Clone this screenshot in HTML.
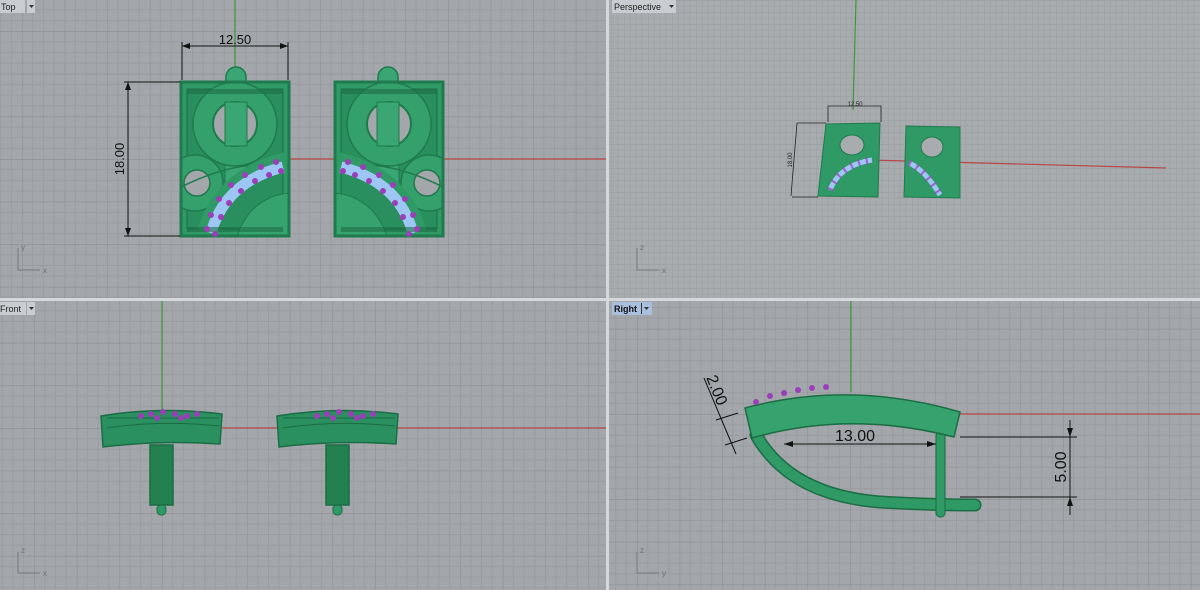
<!DOCTYPE html>
<html><head><meta charset="utf-8"><style>
html,body{margin:0;padding:0;background:#d6d9dc;}
svg{display:block}
text{font-family:"Liberation Sans",sans-serif}
</style></head><body>
<svg width="1200" height="590" viewBox="0 0 1200 590" xmlns="http://www.w3.org/2000/svg">
<defs>
<pattern id="gT" x="235" y="159" width="42.6" height="42.6" patternUnits="userSpaceOnUse">
<rect width="42.6" height="42.6" fill="#a3a6aa"/>
<path d="M10.65 0V42.6M21.3 0V42.6M31.95 0V42.6M0 10.65H42.6M0 21.3H42.6M0 31.95H42.6" stroke="#999ca0" stroke-width="1"/>
<path d="M0 0V42.6M0 0H42.6" stroke="#8c8f93" stroke-width="1.2"/>
</pattern>
<pattern id="gF" x="162" y="428" width="42.6" height="42.6" patternUnits="userSpaceOnUse">
<rect width="42.6" height="42.6" fill="#a3a6aa"/>
<path d="M10.65 0V42.6M21.3 0V42.6M31.95 0V42.6M0 10.65H42.6M0 21.3H42.6M0 31.95H42.6" stroke="#999ca0" stroke-width="1"/>
<path d="M0 0V42.6M0 0H42.6" stroke="#8c8f93" stroke-width="1.2"/>
</pattern>
<pattern id="gR" x="850" y="414" width="42.6" height="42.6" patternUnits="userSpaceOnUse">
<rect width="42.6" height="42.6" fill="#a3a6aa"/>
<path d="M10.65 0V42.6M21.3 0V42.6M31.95 0V42.6M0 10.65H42.6M0 21.3H42.6M0 31.95H42.6" stroke="#999ca0" stroke-width="1"/>
<path d="M0 0V42.6M0 0H42.6" stroke="#8c8f93" stroke-width="1.2"/>
</pattern>
<pattern id="gP" x="0" y="0" width="24" height="12" patternUnits="userSpaceOnUse">
<rect width="24" height="12" fill="#a9acaf"/>
<path d="M6 0V12M12 0V12M18 0V12M0 6H24" stroke="#a0a3a6" stroke-width="1"/>
<path d="M0 0V12M0 0H24" stroke="#989b9f" stroke-width="1"/>
</pattern>
<clipPath id="ec"><rect x="0" y="15" width="108" height="154"/></clipPath>
<g id="ear">
<rect x="45" y="0" width="20" height="30" rx="10" fill="#3aa673" stroke="#1f7a4d" stroke-width="1.5"/>
<g clip-path="url(#ec)">
<rect x="0" y="15" width="108" height="154" fill="#2f9a66"/>
<rect x="6" y="22" width="96" height="140" fill="#2a8f5e" stroke="#1c6e45"/>
<rect x="44" y="22" width="22" height="100" fill="#3aa673" stroke="#1f7a4d"/>
<circle cx="54" cy="57" r="42" fill="#34a06c" stroke="#1f7a4d" stroke-width="1.5"/>
<circle cx="54" cy="57" r="22" fill="#a3a6aa" stroke="#1f7a4d" stroke-width="2"/>
<rect x="44" y="35" width="22" height="44" fill="#3aa673" stroke="#1f7a4d"/>
<circle cx="14" cy="116" r="28" fill="#34a06c" stroke="#1f7a4d" stroke-width="1.5"/>
<circle cx="16" cy="116" r="13" fill="#a3a6aa" stroke="#1f7a4d" stroke-width="1.5"/>
<path d="M0 120 Q60 90 108 100" fill="none" stroke="#1f7a4d" stroke-width="1.5"/>
<path d="M56 169 Q70 130 108 126 L108 169Z" fill="#36a26e" stroke="#1f7a4d"/>
<path d="M24 169 Q40 110 105 94" fill="none" stroke="#2f9a66" stroke-width="18"/>
<path d="M30 166 Q44 115 102 100" fill="none" stroke="#9dc6f5" stroke-width="11"/>
<rect x="6" y="160" width="96" height="5" fill="#1e6e45" opacity=".6"/>
<rect x="6" y="22" width="96" height="5" fill="#1e6e45" opacity=".6"/>
</g>
<rect x="0" y="15" width="108" height="154" fill="none" stroke="#1f7a4d" stroke-width="3"/>
<g fill="#9b3fb8">
<circle cx="26" cy="162" r="3"/><circle cx="34" cy="167" r="3"/><circle cx="30" cy="148" r="3"/><circle cx="40" cy="150" r="3"/>
<circle cx="38" cy="132" r="3"/><circle cx="48" cy="136" r="3"/><circle cx="50" cy="118" r="3"/><circle cx="60" cy="124" r="3"/>
<circle cx="64" cy="108" r="3"/><circle cx="74" cy="114" r="3"/><circle cx="80" cy="100" r="3"/><circle cx="88" cy="108" r="3"/>
<circle cx="95" cy="95" r="3"/><circle cx="100" cy="104" r="3"/>
</g>
</g>
<g id="fr">
<path d="M0 6 Q60 -4 121 4 L119 34 Q60 30 2 37Z" fill="#2a9060" stroke="#1b6d44" stroke-width="1.5"/>
<path d="M6 8 L118 8 M6 18 Q60 10 118 16" stroke="#1b6d44" fill="none"/>
<rect x="49" y="35" width="23" height="60" fill="#23804f" stroke="#1b6d44" stroke-width="1.5"/>
<rect x="56" y="95" width="9" height="10" rx="4" fill="#2f9a66" stroke="#1b6d44"/>
<g fill="#9b3fb8"><circle cx="40" cy="6" r="3"/><circle cx="50" cy="4" r="3"/><circle cx="62" cy="2" r="3"/><circle cx="74" cy="4" r="3"/><circle cx="86" cy="6" r="3"/><circle cx="96" cy="4" r="3"/><circle cx="56" cy="8" r="3"/><circle cx="80" cy="8" r="3"/></g>
</g>
</defs>

<rect x="0" y="0" width="606" height="298" fill="url(#gT)"/>
<rect x="609" y="0" width="591" height="298" fill="url(#gP)"/>
<rect x="0" y="301" width="606" height="289" fill="url(#gF)"/>
<rect x="609" y="301" width="591" height="289" fill="url(#gR)"/>
<rect x="606" y="0" width="3" height="590" fill="#d6d9dc"/>
<rect x="0" y="298" width="1200" height="3" fill="#d6d9dc"/>

<line x1="235" y1="0" x2="235" y2="70" stroke="#3a9a3a" stroke-width="1.2"/>
<line x1="289" y1="159" x2="606" y2="159" stroke="#b84646" stroke-width="1.2"/>
<use href="#ear" x="181" y="67"/>
<use href="#ear" transform="translate(443,67) scale(-1,1)"/>
<g stroke="#111" stroke-width="1" fill="none">
<path d="M182 42V80M288 42V80M182 46H288"/>
<path d="M124 82H180M124 236H180M128 82V236"/>
</g>
<path d="M182 46l8-3v6zM288 46l-8-3v6zM128 82l-3 8h6zM128 236l-3-8h6z" fill="#111"/>
<text x="235" y="44" font-size="13" text-anchor="middle" fill="#111">12.50</text>
<text transform="translate(124,159) rotate(-90)" font-size="13" text-anchor="middle" fill="#111">18.00</text>

<line x1="856" y1="0" x2="853" y2="110" stroke="#3a9a3a" stroke-width="1.2"/>
<line x1="870" y1="160" x2="1166" y2="168" stroke="#b84646" stroke-width="1.2"/>
<path d="M826 124 L880 123 L878 197 L818 196Z" fill="#2f9a66" stroke="#1f7a4d"/>
<ellipse cx="852" cy="145" rx="12" ry="10" fill="#a9acaf" stroke="#1f7a4d"/>
<path d="M830 190 Q840 165 872 160" stroke="#9dc6f5" stroke-width="5" fill="none"/>
<path d="M830 190 Q840 165 872 160" stroke="#9b3fb8" stroke-width="7" stroke-dasharray="2 6" fill="none" opacity=".7"/>
<path d="M906 126 L960 127 L960 198 L904 197Z" fill="#2f9a66" stroke="#1f7a4d"/>
<ellipse cx="932" cy="147" rx="11" ry="10" fill="#a9acaf" stroke="#1f7a4d"/>
<path d="M909 163 Q925 170 940 195" stroke="#9dc6f5" stroke-width="5" fill="none"/>
<path d="M909 163 Q925 170 940 195" stroke="#9b3fb8" stroke-width="7" stroke-dasharray="2 6" fill="none" opacity=".7"/>
<path d="M828 122V106H881V122M797 123H826M792 197H818M797 123L791 196" stroke="#222" fill="none" stroke-width=".8"/>
<text x="855" y="106" font-size="6" text-anchor="middle" fill="#222">12.50</text>
<text transform="translate(792,160) rotate(-90)" font-size="6" text-anchor="middle" fill="#222">18.00</text>

<line x1="162" y1="301" x2="162" y2="410" stroke="#3a9a3a" stroke-width="1.2"/>
<line x1="222" y1="428" x2="606" y2="428" stroke="#b84646" stroke-width="1.2"/>
<use href="#fr" x="101" y="410"/>
<use href="#fr" x="277" y="410"/>

<line x1="851" y1="301" x2="851" y2="392" stroke="#3a9a3a" stroke-width="1.2"/>
<line x1="958" y1="414" x2="1200" y2="414" stroke="#b84646" stroke-width="1.2"/>
<path d="M756 435 Q790 495 880 502 Q930 505 975 505" fill="none" stroke="#1b6d44" stroke-width="13" stroke-linecap="round"/>
<path d="M756 435 Q790 495 880 502 Q930 505 975 505" fill="none" stroke="#2f9a66" stroke-width="10" stroke-linecap="round"/>
<rect x="936" y="432" width="9" height="85" rx="4" fill="#2f9a66" stroke="#1b6d44"/>
<path d="M745 408 Q850 380 960 412 L954 437 Q850 410 752 438Z" fill="#36a26e" stroke="#1b6d44" stroke-width="1.5"/>
<g fill="#9b3fb8"><circle cx="756" cy="402" r="3"/><circle cx="770" cy="396" r="3"/><circle cx="784" cy="393" r="3"/><circle cx="798" cy="390" r="3"/><circle cx="812" cy="388" r="3"/><circle cx="826" cy="387" r="3"/></g>
<g stroke="#111" fill="none" stroke-width="1">
<path d="M784 444H936M960 437H1077M960 497H1077M1070 420V515"/>
<path d="M704 378L736 454M716 420L738 413M725 445L747 438"/>
</g>
<path d="M784 444l9-3v6zM936 444l-9-3v6zM1070 437l-3-9h6zM1070 497l-3 9h6z" fill="#111"/>
<text x="855" y="441" font-size="16" text-anchor="middle" fill="#111">13.00</text>
<text transform="translate(1066,467) rotate(-90)" font-size="16" text-anchor="middle" fill="#111">5.00</text>
<text transform="translate(712,392) rotate(68)" font-size="16" text-anchor="middle" fill="#111">2.00</text>

<g stroke="#7e8185" fill="none" stroke-width="1.2">
<path d="M18 248V270H40"/><path d="M18 552V573H40"/><path d="M637 552V573H659"/><path d="M637 248V270H659"/>
</g>
<g font-size="8" fill="#6e7175">
<text x="21" y="250">y</text><text x="43" y="273">x</text>
<text x="21" y="553">z</text><text x="43" y="576">x</text>
<text x="640" y="553">z</text><text x="662" y="576">y</text>
<text x="640" y="250">z</text><text x="662" y="273">x</text>
</g>

<g font-size="9">
<rect x="0" y="0" width="25" height="13" fill="#c9ccd0"/><rect x="27" y="0" width="8" height="13" fill="#c9ccd0"/>
<text x="1" y="10" fill="#222">Top</text><path d="M29 5h5l-2.5 3z" fill="#333"/>
<rect x="612" y="0" width="56" height="13" fill="#c9ccd0"/><rect x="668" y="0" width="8" height="13" fill="#c9ccd0"/>
<text x="614" y="10" fill="#222">Perspective</text><path d="M669 5h5l-2.5 3z" fill="#333"/>
<rect x="0" y="302" width="26" height="13" fill="#c9ccd0"/><rect x="27" y="302" width="8" height="13" fill="#c9ccd0"/>
<text x="0" y="312" fill="#222">Front</text><path d="M29 307h5l-2.5 3z" fill="#333"/>
<rect x="612" y="302" width="40" height="13" fill="#a8c0de"/>
<text x="614" y="312" fill="#111" font-weight="bold">Right</text><rect x="641" y="303" width="1" height="11" fill="#333"/><path d="M644 307h5l-2.5 3z" fill="#333"/>
</g>
</svg>
</body></html>
